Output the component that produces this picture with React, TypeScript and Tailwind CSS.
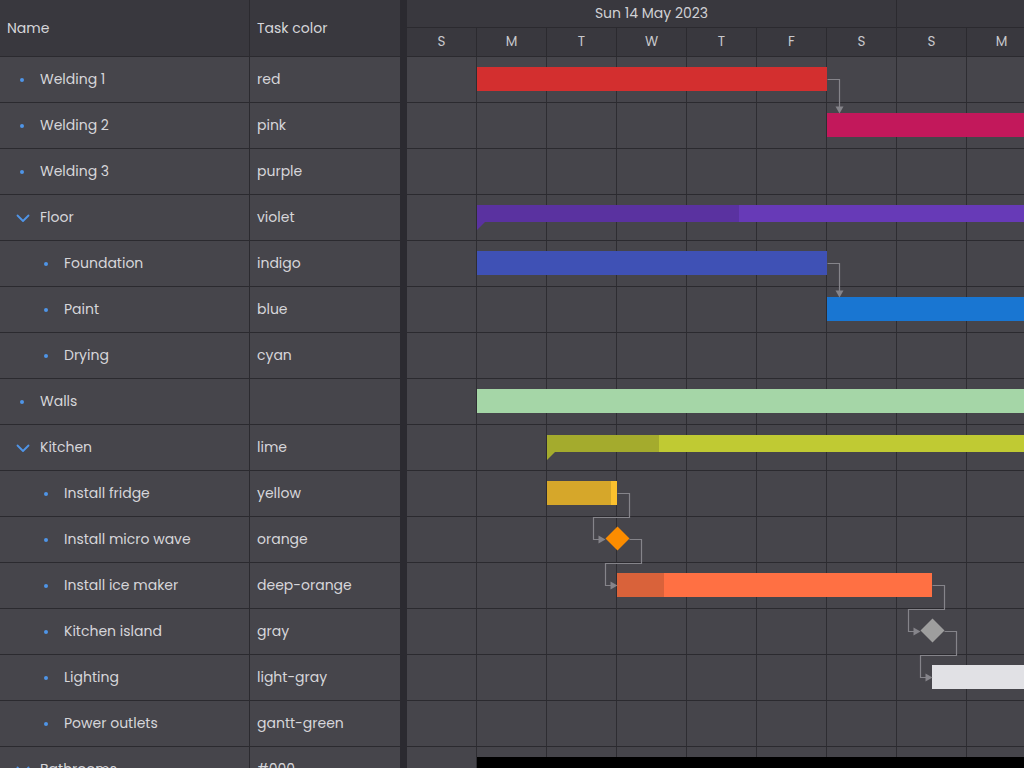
import React from 'react';

type Row = { name: string; color: string; level: 1 | 2; parent?: boolean };

const rows: Row[] = [
  { name: 'Welding 1', color: 'red', level: 1 },
  { name: 'Welding 2', color: 'pink', level: 1 },
  { name: 'Welding 3', color: 'purple', level: 1 },
  { name: 'Floor', color: 'violet', level: 1, parent: true },
  { name: 'Foundation', color: 'indigo', level: 2 },
  { name: 'Paint', color: 'blue', level: 2 },
  { name: 'Drying', color: 'cyan', level: 2 },
  { name: 'Walls', color: '', level: 1 },
  { name: 'Kitchen', color: 'lime', level: 1, parent: true },
  { name: 'Install fridge', color: 'yellow', level: 2 },
  { name: 'Install micro wave', color: 'orange', level: 2 },
  { name: 'Install ice maker', color: 'deep-orange', level: 2 },
  { name: 'Kitchen island', color: 'gray', level: 2 },
  { name: 'Lighting', color: 'light-gray', level: 2 },
  { name: 'Power outlets', color: 'gantt-green', level: 2 },
  { name: 'Bathrooms', color: '#000', level: 1, parent: true },
];

const days = ['S', 'M', 'T', 'W', 'T', 'F', 'S', 'S', 'M'];

// x values are relative to the start of the timeline (page x 407)
type Bar =
  | { kind: 'task'; x: number; w: number; color: string; done?: number; doneColor?: string }
  | { kind: 'parent'; x: number; w: number; color: string; done: number; doneColor: string }
  | { kind: 'milestone'; x: number; color: string };

const bars: (Bar | null)[] = [
  { kind: 'task', x: 70, w: 350, color: '#d32f2f' },
  { kind: 'task', x: 420, w: 240, color: '#c2185b' },
  null,
  { kind: 'parent', x: 70, w: 590, color: '#673ab7', done: 262, doneColor: '#5a32a0' },
  { kind: 'task', x: 70, w: 350, color: '#3f51b5' },
  { kind: 'task', x: 420, w: 240, color: '#1976d2' },
  null,
  { kind: 'task', x: 70, w: 590, color: '#a5d6a7' },
  { kind: 'parent', x: 140, w: 520, color: '#c0ca33', done: 112, doneColor: '#a4ab2d' },
  { kind: 'task', x: 140, w: 70, color: '#fbc02d', done: 64, doneColor: '#d6a72a' },
  { kind: 'milestone', x: 210, color: '#fb8c00' },
  { kind: 'task', x: 210, w: 315, color: '#ff7043', done: 47, doneColor: '#d9623a' },
  { kind: 'milestone', x: 525, color: '#9e9e9e' },
  { kind: 'task', x: 525, w: 140, color: '#e1e1e5' },
  null,
  { kind: 'task', x: 70, w: 590, color: '#000000' },
];

// dependency lines in timeline coordinates (x from 407, y from 57)
const links: { pts: [number, number][]; dir: 'down' | 'right' }[] = [
  { pts: [[420, 22], [432, 22], [432, 56]], dir: 'down' },
  { pts: [[420, 206], [432, 206], [432, 240]], dir: 'down' },
  { pts: [[210, 436], [222, 436], [222, 460], [186, 460], [186, 482], [198, 482]], dir: 'right' },
  { pts: [[222, 482], [234, 482], [234, 506], [198, 506], [198, 528], [210, 528]], dir: 'right' },
  { pts: [[525, 528], [537, 528], [537, 552], [501, 552], [501, 574], [513, 574]], dir: 'right' },
  { pts: [[537, 574], [549, 574], [549, 598], [513, 598], [513, 620], [525, 620]], dir: 'right' },
];

const Dot = () => <span className="w-[4px] h-[4px] rounded-full bg-[#4f95e8] shrink-0" />;

const Chevron = () => (
  <svg width="14" height="14" viewBox="0 0 14 14" className="shrink-0">
    <path d="M1.5 4.5 L7 10 L12.5 4.5" fill="none" stroke="#4f95e8" strokeWidth="1.8" strokeLinecap="round" strokeLinejoin="round" />
  </svg>
);

const BarView = ({ bar }: { bar: Bar }) => {
  if (bar.kind === 'milestone') {
    return (
      <div
        className="absolute top-[13px] w-[17px] h-[17px] rotate-45"
        style={{ left: bar.x - 8.5, backgroundColor: bar.color }}
      />
    );
  }
  if (bar.kind === 'parent') {
    return (
      <div className="absolute top-[10px] h-[17px]" style={{ left: bar.x, width: bar.w }}>
        <div className="flex h-full w-full">
          <div className="h-full" style={{ width: bar.done, backgroundColor: bar.doneColor }} />
          <div className="h-full flex-1" style={{ backgroundColor: bar.color }} />
        </div>
        <svg width="8" height="8" className="absolute left-0 top-[17px]">
          <polygon points="0,0 8,0 0,8" fill={bar.doneColor} />
        </svg>
      </div>
    );
  }
  return (
    <div className="absolute top-[10px] h-[24px] flex" style={{ left: bar.x, width: bar.w, backgroundColor: bar.color }}>
      {bar.done ? <div className="h-full" style={{ width: bar.done, backgroundColor: bar.doneColor }} /> : null}
    </div>
  );
};

export default function App() {
  return (
    <div
      className="w-[1024px] h-[768px] overflow-hidden flex bg-[#46454b] text-[#d6d6da]"
      style={{ fontFamily: 'Poppins, Inter, "Noto Sans", sans-serif' }}
    >
      {/* grid */}
      <div className="w-[400px] shrink-0 flex flex-col">
        <div className="h-[57px] shrink-0 flex bg-[#39383e] border-b border-[#2b2a2f] text-[14px] text-[#d6d6da]">
          <div className="w-[250px] border-r border-[#2b2a2f] flex items-center px-[7px]">Name</div>
          <div className="flex-1 flex items-center px-[7px]">Task color</div>
        </div>
        {rows.map((r, i) => (
          <div key={i} className="h-[46px] shrink-0 flex border-b border-[#2b2a2f] text-[14px]">
            <div className="w-[250px] border-r border-[#2b2a2f] flex items-center">
              {r.parent ? (
                <div className="flex items-center pl-[16px] gap-[10px]">
                  <Chevron />
                  <span>{r.name}</span>
                </div>
              ) : (
                <div className={`flex items-center gap-[16px] ${r.level === 1 ? 'pl-[20px]' : 'pl-[44px]'}`}>
                  <Dot />
                  <span>{r.name}</span>
                </div>
              )}
            </div>
            <div className="flex-1 flex items-center px-[7px]">{r.color}</div>
          </div>
        ))}
      </div>

      {/* splitter */}
      <div className="w-[7px] shrink-0 bg-[#2b2a30]" />

      {/* timeline */}
      <div className="flex-1 overflow-hidden flex flex-col">
        <div className="h-[57px] shrink-0 flex flex-col bg-[#39383e] border-b border-[#2b2a2f] w-[630px]">
          <div className="h-[28px] flex border-b border-[#2b2a2f] text-[14px] text-[#d0d0d4]">
            <div className="w-[490px] border-r border-[#2b2a2f] flex items-center justify-center">Sun 14 May 2023</div>
            <div className="flex-1" />
          </div>
          <div className="flex-1 flex text-[13.5px] text-[#c8c8cc]">
            {days.map((d, i) => (
              <div key={i} className="w-[70px] shrink-0 border-r border-[#2b2a2f] flex items-center justify-center">
                {d}
              </div>
            ))}
          </div>
        </div>
        <div className="relative w-[630px]">
          {rows.map((_, i) => {
            const bar = bars[i];
            return (
              <div key={i} className="relative h-[46px] flex border-b border-[#2b2a2f]">
                {days.map((_, j) => (
                  <div key={j} className="w-[70px] shrink-0 h-full border-r border-[#2e2d32]" />
                ))}
                {bar ? <BarView bar={bar} /> : null}
              </div>
            );
          })}
          <svg className="absolute left-0 top-0 pointer-events-none" width="630" height="720">
            {links.map((l, i) => {
              const last = l.pts[l.pts.length - 1];
              const line = l.pts.map((p, k) => {
                if (k === l.pts.length - 1) {
                  return l.dir === 'down' ? [p[0], p[1] - 5] : [p[0] - 6, p[1]];
                }
                return p;
              });
              const [x, y] = last;
              const head =
                l.dir === 'down'
                  ? `${x - 4},${y - 7} ${x + 4},${y - 7} ${x},${y}`
                  : `${x - 7},${y - 4} ${x - 7},${y + 4} ${x},${y}`;
              return (
                <g key={i}>
                  <polyline
                    points={line.map((p) => `${p[0] + 0.5},${p[1] + 0.5}`).join(' ')}
                    fill="none"
                    stroke="#85848a"
                    strokeWidth="1.2"
                  />
                  <polygon points={head} fill="#85848a" transform="translate(0.5,0.5)" />
                </g>
              );
            })}
          </svg>
        </div>
      </div>
    </div>
  );
}
